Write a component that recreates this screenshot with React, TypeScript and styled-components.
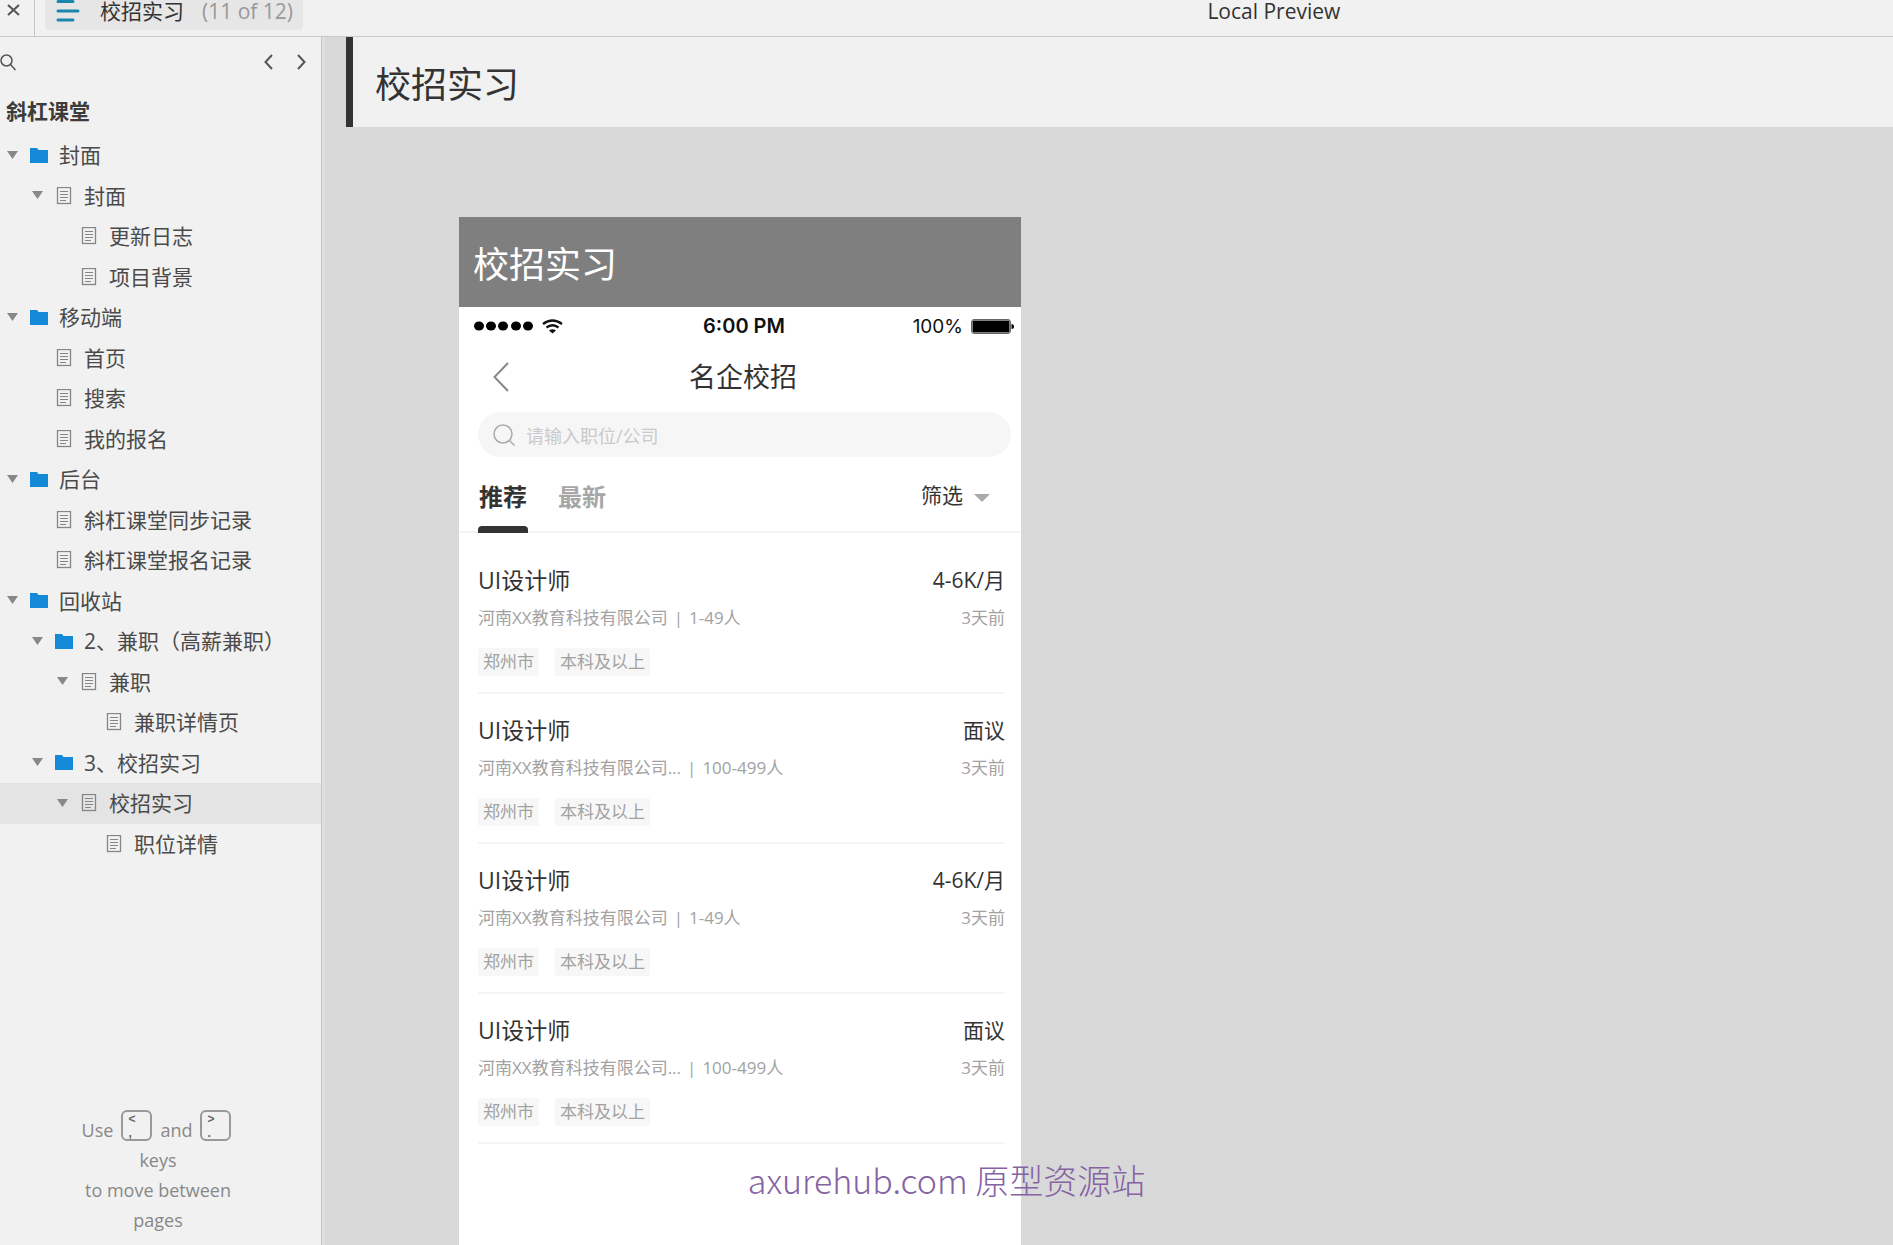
import React from 'react';
import styled, { createGlobalStyle } from 'styled-components';

const GlobalStyle = createGlobalStyle`
  * { box-sizing: border-box; }
  body {
    margin: 0;
    background: #d8d8d8;
    font-family: "Open Sans", "Noto Sans CJK SC", sans-serif;
    font-weight: 400;
    color: #333;
  }
  button, input { font: inherit; color: inherit; }
  button { padding: 0; border: 0; background: none; cursor: pointer; }
  a { color: inherit; text-decoration: none; }
  h1, h2, h3, p, ul { margin: 0; padding: 0; font-weight: inherit; }
  ul { list-style: none; }
  svg { display: block; flex: none; }
`;

const Page = styled.div`
  position: relative;
  display: flex;
  flex-direction: column;
  min-height: 100vh;
`;

const TopBar = styled.header`
  display: flex;
  align-items: stretch;
  height: 37px;
  background: #f1f1f1;
  border-bottom: 1px solid #c8c8c8;
`;

const CloseButton = styled.button`
  display: flex;
  width: 35px;
  padding: 4px 0 0 7px;
  border-right: 1px solid #c4c4c4;
`;

const PageButton = styled.button`
  display: flex;
  align-items: center;
  height: 30px;
  margin-left: 10px;
  padding: 0 10px 8px 11px;
  border-radius: 0 0 4px 4px;
  background: #e6e6e6;
  font-size: 21px;
  line-height: 22px;
`;

const PageName = styled.span`
  margin-left: 20px;
`;

const PageCount = styled.span`
  margin-left: 18px;
  color: #999;
`;

const Spacer = styled.div<{ $grow: number }>`
  flex: ${(p) => p.$grow} 1 0;
`;

const PreviewLabel = styled.span`
  font-size: 21px;
  line-height: 22px;
`;

const Body = styled.div`
  display: flex;
  flex: 1;
`;

const Sidebar = styled.aside`
  display: flex;
  flex-direction: column;
  flex: none;
  width: 325px;
  background: #f1f1f1;
  border-right: 3px solid #dfdfdf;
  box-shadow: inset -1px 0 #c6c6c6;
`;

const SidebarTools = styled.div`
  display: flex;
  align-items: center;
  height: 50px;
  padding: 0 16px 0 0;
`;

const ToolButton = styled.button<{ $push?: boolean }>`
  margin-left: ${(p) => (p.$push ? 'auto' : '0')};
  & + & { padding-left: 24px; }
  &:first-child + & { padding-left: 0; }
`;

const ProjectName = styled.h2`
  padding-left: 6px;
  font-size: 21px;
  font-weight: 700;
  line-height: 48px;
  color: #3c3c3c;
`;

const Tree = styled.ul`
  display: grid;
  grid-auto-rows: 1fr;
  height: 729px;
`;

const TreeRow = styled.li<{ $level: number; $selected?: boolean }>`
  display: flex;
  align-items: center;
  margin-right: 1px;
  padding-left: ${(p) => 7 + p.$level * 25}px;
  background: ${(p) => (p.$selected ? '#e4e4e4' : 'transparent')};
`;

const Toggle = styled.button<{ $hidden: boolean }>`
  width: 23px;
  visibility: ${(p) => (p.$hidden ? 'hidden' : 'visible')};
`;

const TreeLink = styled.a`
  display: flex;
  align-items: center;
  gap: 11px;
  font-size: 21px;
  line-height: 30px;
  white-space: nowrap;
  color: #4a4a4a;
`;

const KeyHint = styled.p`
  margin-top: auto;
  padding: 0 6px 10px 0;
  text-align: center;
  font-size: 18px;
  line-height: 30px;
  color: #888;
`;

const HintLine = styled.span`
  display: flex;
  justify-content: center;
  align-items: flex-end;
  gap: 8px;
  padding-right: 3px;
`;

const Key = styled.kbd`
  display: flex;
  flex-direction: column;
  width: 31px;
  height: 31px;
  margin-bottom: 4px;
  padding: 0 0 0 5px;
  border: 2px solid #999;
  border-radius: 6px;
  font-family: "Liberation Sans", sans-serif;
  font-size: 12px;
  font-weight: 700;
  line-height: 14px;
  text-align: left;
  color: #666;
`;

const Canvas = styled.main`
  display: flex;
  flex-direction: column;
  flex: 1;
  min-width: 0;
`;

const CanvasTitle = styled.h1`
  height: 90px;
  margin-left: 21px;
  padding-left: 22px;
  border-left: 7px solid #333;
  background: #f1f1f1;
  font-size: 36px;
  line-height: 96px;
`;

const Phone = styled.section`
  display: flex;
  flex-direction: column;
  flex: 1;
  width: 562px;
  margin: 90px 0 0 134px;
  background: #fff;
`;

const PhoneCaption = styled.h2`
  height: 90px;
  padding-left: 14px;
  background: #7f7f7f;
  color: #fff;
  font-size: 36px;
  line-height: 96px;
`;

const StatusBar = styled.div`
  display: grid;
  grid-template-columns: 1fr auto 1fr;
  align-items: center;
  height: 38px;
  padding: 0 7px 0 15px;
  font-family: Inter, sans-serif;
  color: #111;
`;

const Signal = styled.div`
  display: flex;
  align-items: center;
  gap: 8px;
`;

const Clock = styled.span`
  font-size: 20px;
  font-weight: 600;
`;

const Power = styled.div`
  display: flex;
  justify-content: flex-end;
  align-items: center;
  gap: 8px;
  font-size: 19px;
`;

const NavBar = styled.div`
  display: grid;
  grid-template-columns: 1fr auto 1fr;
  align-items: center;
  height: 67px;
  padding: 0 28px 4px 34px;
`;

const NavTitle = styled.h3`
  font-size: 27px;
  line-height: 36px;
`;

const SearchBox = styled.label`
  display: flex;
  align-items: center;
  gap: 11px;
  height: 45px;
  margin: 0 10px 0 19px;
  padding: 0 15px;
  border-radius: 23px;
  background: #f6f6f6;
`;

const SearchInput = styled.input`
  flex: 1;
  min-width: 0;
  height: 45px;
  padding: 2px 0 0;
  border: 0;
  outline: 0;
  background: none;
  font-size: 18px;
  &::placeholder { color: #cacaca; opacity: 1; }
`;

const TabBar = styled.div`
  display: flex;
  align-items: stretch;
  height: 76px;
  padding: 0 31px 0 19px;
  box-shadow: inset 0 -2px #f3f3f3;
`;

const Tab = styled.button<{ $active?: boolean }>`
  display: flex;
  flex-direction: column;
  justify-content: space-between;
  margin-right: 29px;
  padding-top: 22px;
  font-size: 24px;
  font-weight: 700;
  line-height: 36px;
  color: ${(p) => (p.$active ? '#333' : '#a6a6a6')};
  &::after {
    content: '';
    width: 50px;
    height: 7px;
    border-radius: 4px 4px 0 0;
    background: ${(p) => (p.$active ? '#333' : 'transparent')};
  }
`;

const FilterButton = styled.button`
  display: flex;
  align-items: center;
  gap: 11px;
  margin-left: auto;
  padding-bottom: 2px;
  font-size: 21px;
`;

const JobList = styled.ul`
  padding: 11px 16px 0 19px;
`;

const JobCard = styled.li`
  height: 150px;
  padding-top: 19px;
  border-bottom: 2px solid #f5f5f5;
`;

const JobLine = styled.div`
  display: flex;
  justify-content: space-between;
  align-items: center;
  white-space: nowrap;
`;

const JobTitle = styled.h3`
  font-size: 23px;
  line-height: 34px;
  color: #333;
`;

const Salary = styled.span`
  font-size: 21px;
  line-height: 34px;
  color: #333;
`;

const Meta = styled.span`
  display: flex;
  gap: 6px;
  font-size: 17px;
  line-height: 42px;
  color: #a2a2a2;
`;

const Tags = styled.div`
  display: flex;
  gap: 16px;
  margin-top: 9px;
`;

const Tag = styled.span`
  padding: 0 5px;
  border-radius: 2px;
  background: #f7f7f7;
  font-size: 17px;
  line-height: 28px;
  color: #a2a2a2;
`;

const Watermark = styled.p`
  position: absolute;
  right: 0;
  bottom: 41px;
  left: 0;
  text-align: center;
  font-family: "Noto Sans CJK SC", sans-serif;
  font-size: 34px;
  font-weight: 300;
  line-height: 48px;
  color: #8562a3;
  pointer-events: none;
`;

type Node = { level: number; name: string; kind: 'folder' | 'page'; open?: boolean; selected?: boolean };

const nodes: Node[] = [
  { level: 0, name: '封面', kind: 'folder', open: true },
  { level: 1, name: '封面', kind: 'page', open: true },
  { level: 2, name: '更新日志', kind: 'page' },
  { level: 2, name: '项目背景', kind: 'page' },
  { level: 0, name: '移动端', kind: 'folder', open: true },
  { level: 1, name: '首页', kind: 'page' },
  { level: 1, name: '搜索', kind: 'page' },
  { level: 1, name: '我的报名', kind: 'page' },
  { level: 0, name: '后台', kind: 'folder', open: true },
  { level: 1, name: '斜杠课堂同步记录', kind: 'page' },
  { level: 1, name: '斜杠课堂报名记录', kind: 'page' },
  { level: 0, name: '回收站', kind: 'folder', open: true },
  { level: 1, name: '2、兼职（高薪兼职）', kind: 'folder', open: true },
  { level: 2, name: '兼职', kind: 'page', open: true },
  { level: 3, name: '兼职详情页', kind: 'page' },
  { level: 1, name: '3、校招实习', kind: 'folder', open: true },
  { level: 2, name: '校招实习', kind: 'page', open: true, selected: true },
  { level: 3, name: '职位详情', kind: 'page' },
];

const fixedPay = { company: '河南XX教育科技有限公司', size: '1-49人', salary: '4-6K/月' };
const openPay = { company: '河南XX教育科技有限公司...', size: '100-499人', salary: '面议' };
const jobs = [fixedPay, openPay, fixedPay, openPay];

const FolderIcon = () => (
  <svg width="18" height="17" viewBox="0 0 18 17" aria-hidden="true">
    <path d="M0 1h7l1.5 2H18v13H0z" fill="#1489d8" />
  </svg>
);

const PageIcon = () => (
  <svg width="18" height="18" viewBox="0 0 18 18" fill="none" stroke="#858585" aria-hidden="true">
    <rect x="2.5" y="0.5" width="13" height="16" strokeWidth="1.3" />
    <path d="M5 4.500h8M5 7.500h8M5 10.500h8M5 13.500h6" />
  </svg>
);

const Chevron = ({ left }: { left?: boolean }) => (
  <svg width="9" height="16" viewBox="0 0 9 16" fill="none" stroke="#555" strokeWidth="2" aria-hidden="true">
    <path d={left ? 'M8 1L1.5 8 8 15' : 'M1 1l6.5 7L1 15'} />
  </svg>
);

export default function App() {
  return (
    <Page>
      <GlobalStyle />
      <TopBar>
        <CloseButton aria-label="Close">
          <svg width="13" height="12" viewBox="0 0 13 12" stroke="#555" strokeWidth="2">
            <path d="M1 1l11 10M12 1L1 11" />
          </svg>
        </CloseButton>
        <PageButton>
          <svg width="24" height="22" viewBox="0 0 24 22" stroke="#1a86ae" strokeWidth="3" strokeLinecap="round">
            <path d="M2 1.5h15M2 11h20M2 20h15" />
          </svg>
          <PageName>校招实习</PageName>
          <PageCount>(11 of 12)</PageCount>
        </PageButton>
        <Spacer $grow={18} />
        <PreviewLabel>Local Preview</PreviewLabel>
        <Spacer $grow={11} />
      </TopBar>
      <Body>
        <Sidebar>
          <SidebarTools>
            <ToolButton aria-label="Search">
              <svg width="16" height="17" viewBox="0 0 16 17" fill="none" stroke="#555" strokeWidth="1.5">
                <circle cx="6.5" cy="6.5" r="5.5" />
                <path d="M10.5 10.5l5 5.5" />
              </svg>
            </ToolButton>
            <ToolButton $push aria-label="Previous page"><Chevron left /></ToolButton>
            <ToolButton aria-label="Next page"><Chevron /></ToolButton>
          </SidebarTools>
          <ProjectName>斜杠课堂</ProjectName>
          <Tree>
            {nodes.map((n, i) => (
              <TreeRow key={i} $level={n.level} $selected={n.selected}>
                <Toggle $hidden={!n.open} aria-label="Collapse">
                  <svg width="11" height="9" viewBox="0 0 11 9"><path d="M0 0h11L5.5 8z" fill="#888" /></svg>
                </Toggle>
                <TreeLink href="#">
                  {n.kind === 'folder' ? <FolderIcon /> : <PageIcon />}
                  {n.name}
                </TreeLink>
              </TreeRow>
            ))}
          </Tree>
          <KeyHint>
            <HintLine>
              Use <Key><span>&lt;</span><span>,</span></Key> and <Key><span>&gt;</span><span>.</span></Key>
            </HintLine>
            keys<br />to move between<br />pages
          </KeyHint>
        </Sidebar>
        <Canvas>
          <CanvasTitle>校招实习</CanvasTitle>
          <Phone>
            <PhoneCaption>校招实习</PhoneCaption>
            <StatusBar>
              <Signal>
                <svg width="60" height="10" viewBox="0 0 60 10" fill="#000">
                  {[5, 17, 29, 42, 54].map((x) => <ellipse key={x} cx={x} cy="5" rx="5" ry="4.5" />)}
                </svg>
                <svg width="21" height="15" viewBox="0 0 21 15" fill="none" stroke="#111" strokeWidth="2.3">
                  <path d="M1 5Q10.500 -2 20 5M4.500 8.500Q10.500 4 16.500 8.500" />
                  <path d="M7 11.500Q10.500 9 14 11.500L10.500 14.500z" fill="#111" stroke="none" />
                </svg>
              </Signal>
              <Clock>6:00 PM</Clock>
              <Power>
                100%
                <svg width="43" height="15" viewBox="0 0 43 15">
                  <rect x="0.500" y="0.500" width="39" height="14" rx="2.500" fill="#fff" stroke="#666" />
                  <rect x="1.500" y="1.500" width="37" height="12" rx="1" fill="#000" />
                  <path d="M40.500 5q2.500 0 2.500 2.500t-2.500 2.500z" fill="#000" />
                </svg>
              </Power>
            </StatusBar>
            <NavBar>
              <button aria-label="Back">
                <svg width="16" height="30" viewBox="0 0 16 30" fill="none" stroke="#888" strokeWidth="2">
                  <path d="M15 1L1.500 15 15 29" />
                </svg>
              </button>
              <NavTitle>名企校招</NavTitle>
            </NavBar>
            <SearchBox>
              <svg width="22" height="22" viewBox="0 0 22 22" fill="none" stroke="#aaa" strokeWidth="1.500">
                <circle cx="10" cy="10" r="9" />
                <path d="M16.500 16.500l5 5" />
              </svg>
              <SearchInput placeholder="请输入职位/公司" aria-label="请输入职位/公司" />
            </SearchBox>
            <TabBar>
              <Tab $active>推荐</Tab>
              <Tab>最新</Tab>
              <FilterButton>
                筛选
                <svg width="16" height="18" viewBox="0 0 16 18"><path d="M0 9h16L8 17z" fill="#aaa" /></svg>
              </FilterButton>
            </TabBar>
            <JobList>
              {jobs.map((job, i) => (
                <JobCard key={i}>
                  <JobLine>
                    <JobTitle>UI设计师</JobTitle>
                    <Salary>{job.salary}</Salary>
                  </JobLine>
                  <JobLine>
                    <Meta><span>{job.company}</span><span>|</span><span>{job.size}</span></Meta>
                    <Meta>3天前</Meta>
                  </JobLine>
                  <Tags>
                    <Tag>郑州市</Tag>
                    <Tag>本科及以上</Tag>
                  </Tags>
                </JobCard>
              ))}
            </JobList>
          </Phone>
        </Canvas>
      </Body>
      <Watermark>axurehub.com 原型资源站</Watermark>
    </Page>
  );
}
